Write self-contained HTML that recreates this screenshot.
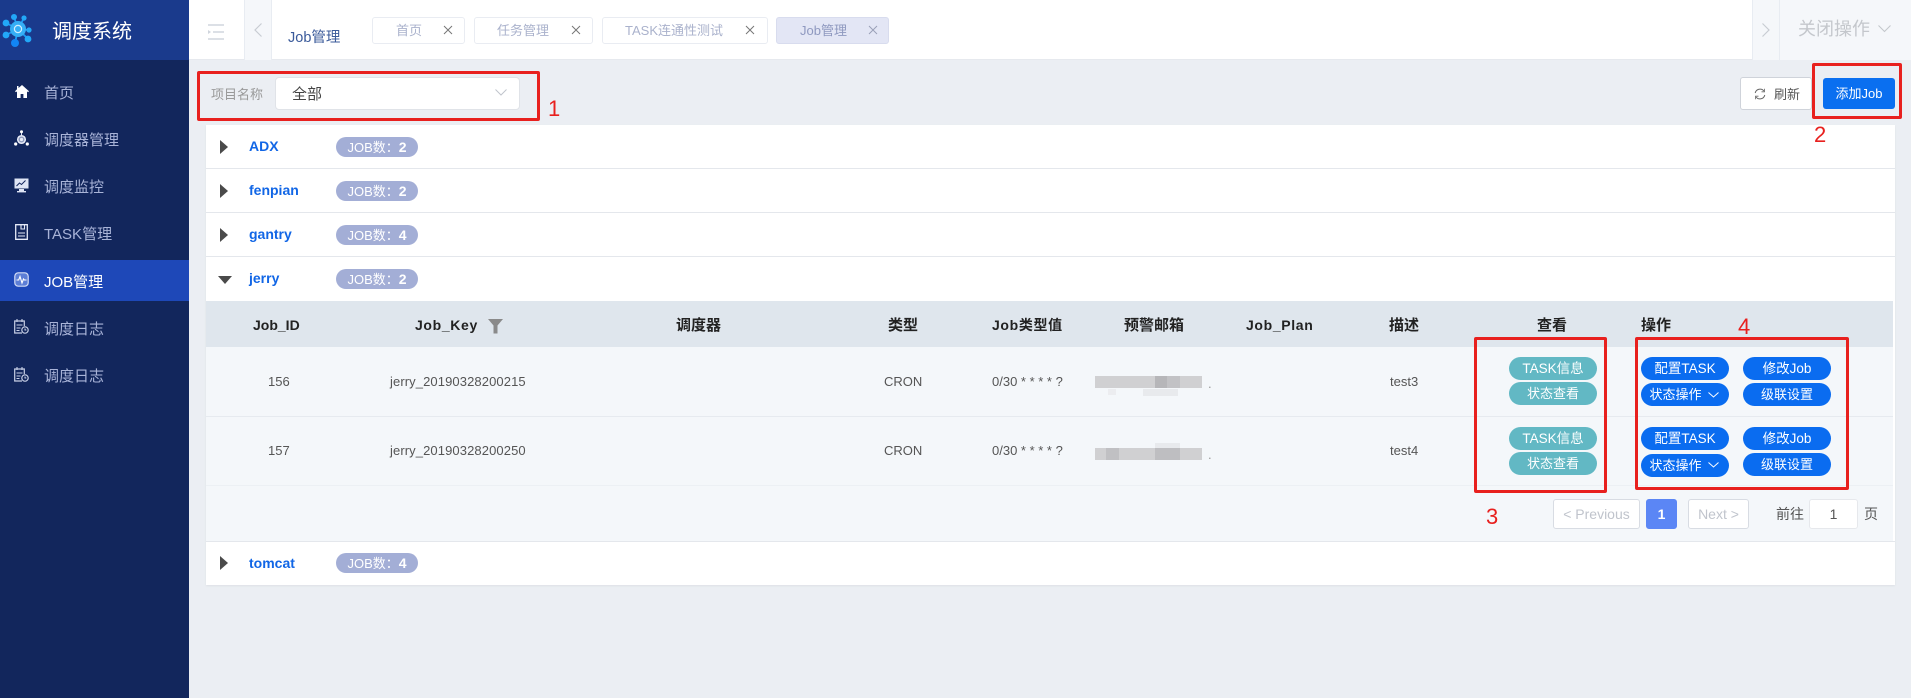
<!DOCTYPE html>
<html lang="zh"><head><meta charset="utf-8"><title>调度系统</title>
<style>
html,body{margin:0;padding:0;background:#ebeef3}
#p{position:relative;width:1911px;height:698px;overflow:hidden;background:#ebeef3;font-family:"Liberation Sans","Noto Sans CJK SC",sans-serif;font-size:13px;color:#555}
#p div,#p span.a,#p svg{position:absolute;box-sizing:border-box}
.t{white-space:nowrap;height:20px;line-height:20px}
.c{text-align:center}
.side{color:#a9b4d8;font-size:15px;left:44px}
.tab{top:17px;height:27px;background:#fff;border:1px solid #e9ecf2;border-radius:3px}
.tt{font-size:13px;color:#aab2cc;top:21px}
.x{top:25px;width:10px;height:10px}
.line{left:206px;width:1689px;height:1px;background:#e4e7ec}
.cr{left:220px;width:0;height:0;border-left:8px solid #4a4a4a;border-top:7px solid transparent;border-bottom:7px solid transparent}
.name{left:249px;font-weight:bold;font-size:14px;color:#1166e6}
.pill{left:336px;width:82px;height:20px;line-height:20px;background:#a3aed6;border-radius:10px;color:#fff;font-size:13px;text-align:center;white-space:nowrap}
.pill b{font-weight:bold;font-size:14px}
.th{font-weight:bold;font-size:14px;color:#222;top:315px}
.th15{font-size:15px;top:316px}
.ls{letter-spacing:.65px}
.td{font-size:13px;color:#555}
.btn{height:23px;line-height:23px;border-radius:12px;color:#fff;font-size:13px;text-align:center;white-space:nowrap;width:88px}
.g{background:#62b8c4;left:1509px;font-size:13.5px}
.b{background:#0a6cf0}
.red{border:3px solid #e8201e;border-radius:2px}
.n{color:#e8201e;font-size:22px;line-height:24px;height:24px}
.pg{top:499px;height:30px;line-height:29px;background:#fff;border:1px solid #d8dce3;border-radius:3px;text-align:center;color:#c0c4cc;font-size:14px}
</style></head><body><div id="p">

<!-- sidebar -->
<div style="left:0;top:0;width:189px;height:698px;background:#12265c"></div>
<div style="left:0;top:0;width:189px;height:60px;background:#1a3a8c"></div>
<svg style="left:0;top:10px" width="40" height="40" viewBox="0 10 40 40">
<g stroke="#1b9cf5" stroke-width="1.8"><path d="M18 29L14 17M18 29L24 18M18 29L29 30M18 29L28 39M18 29L15 43M18 29L6 35M18 29L6 23"/></g>
<g fill="#22a8f8"><circle cx="14" cy="17" r="3"/><circle cx="24" cy="18" r="2.6"/><circle cx="29" cy="30" r="2.6"/><circle cx="28" cy="39" r="3.4"/><circle cx="15" cy="43" r="4" fill="#1285f5"/><circle cx="6" cy="35" r="3.4"/><circle cx="6" cy="23" r="3.4"/><circle cx="18" cy="29" r="8" fill="#35aef5"/></g>
<circle cx="18" cy="29" r="3.6" fill="none" stroke="#cfeeff" stroke-width="1.2"/></svg>
<div class="t" style="left:52px;top:20px;height:24px;line-height:24px;font-size:20px;color:#fff">调度系统</div>

<svg style="left:15px;top:85px" width="14" height="13" viewBox="0 0 14 13"><path d="M7 0L3.5 3V1H2v3.3L0 6.2l1 1L2 6.4V13h3.6V9h2.8v4H12V6.4l1 .8 1-1z" fill="#fff"/></svg>
<div class="t side" style="top:84px">首页</div>
<svg style="left:14px;top:130px" width="15" height="16" viewBox="0 0 15 16"><circle cx="7.5" cy="9.5" r="3.8" fill="#8f9bbd" stroke="#e6ebf8" stroke-width="1.5"/><circle cx="7.5" cy="9.5" r="1.6" fill="#e6ebf8"/><circle cx="7.5" cy="1.7" r="1.5" fill="#fff"/><circle cx="1.7" cy="14" r="1.6" fill="#fff"/><circle cx="13.3" cy="14" r="1.6" fill="#fff"/><path d="M7.5 3v3" stroke="#dfe5f5"/></svg>
<div class="t side" style="top:131px">调度器管理</div>
<svg style="left:14px;top:178px" width="15" height="15" viewBox="0 0 15 15"><rect x="0.5" y="0.5" width="14" height="10" fill="#dfe5f5"/><path d="M2.5 8L5.5 5l2 1.5 4-4" fill="none" stroke="#12265c" stroke-width="1"/><rect x="5" y="11" width="5" height="2" fill="#dfe5f5"/><rect x="3" y="13" width="9" height="1.4" fill="#dfe5f5"/></svg>
<div class="t side" style="top:178px">调度监控</div>
<svg style="left:15px;top:224px" width="13" height="16" viewBox="0 0 13 16"><path d="M.7.7h11.6v14.6H.7z" fill="none" stroke="#e4e9f7" stroke-width="1.3"/><path d="M6 1v4h3.5V1" fill="none" stroke="#e4e9f7" stroke-width="1.1"/><path d="M3 9h7M3 12h7" stroke="#e4e9f7" stroke-width="1.1"/></svg>
<div class="t side" style="top:225px">TASK管理</div>
<div style="left:0;top:260px;width:189px;height:41px;background:#1e48b8"></div>
<svg style="left:14px;top:272px" width="15" height="15" viewBox="0 0 15 15"><rect x="0.8" y="0.8" width="13.4" height="13.4" rx="3.5" fill="#5c7ed6" stroke="#d4ddf5" stroke-width="1.2"/><path d="M2.5 8h2.2l1.3-3.5L8 11l1.5-4 .8 1h2.2" fill="none" stroke="#fff" stroke-width="1.1"/></svg>
<div class="t side" style="top:273px;color:#fff">JOB管理</div>
<svg style="left:14px;top:319px" width="15" height="15" viewBox="0 0 15 15"><path d="M8 14H.7V2h9.6v5" fill="none" stroke="#c8d0e6" stroke-width="1.2"/><path d="M3 0v3M8 0v3M2.5 6h6M2.5 9h4M2.5 11.5h3" stroke="#c8d0e6" stroke-width="1.1"/><circle cx="11" cy="11" r="3.2" fill="#12265c" stroke="#c8d0e6" stroke-width="1.2"/><path d="M11 9.5V11h1.3" fill="none" stroke="#c8d0e6"/></svg>
<div class="t side" style="top:320px">调度日志</div>
<svg style="left:14px;top:367px" width="15" height="15" viewBox="0 0 15 15"><path d="M8 14H.7V2h9.6v5" fill="none" stroke="#c8d0e6" stroke-width="1.2"/><path d="M3 0v3M8 0v3M2.5 6h6M2.5 9h4M2.5 11.5h3" stroke="#c8d0e6" stroke-width="1.1"/><circle cx="11" cy="11" r="3.2" fill="#12265c" stroke="#c8d0e6" stroke-width="1.2"/><path d="M11 9.5V11h1.3" fill="none" stroke="#c8d0e6"/></svg>
<div class="t side" style="top:367px">调度日志</div>

<!-- header -->
<div style="left:189px;top:0;width:1722px;height:60px;background:#fff;border-bottom:1px solid #e6e9ee"></div>
<svg style="left:208px;top:24px" width="16" height="16" viewBox="0 0 16 16"><path d="M0 1h16M5 8h11M0 15h16" stroke="#d0d5dd" stroke-width="1.4"/><path d="M0 6l3 2-3 2z" fill="#d0d5dd"/></svg>
<div style="left:244px;top:0;width:28px;height:60px;background:#f5f7fa;border-left:1px solid #e8ecf2;border-right:1px solid #e8ecf2"></div>
<svg style="left:254px;top:23px" width="8" height="14" viewBox="0 0 8 14"><path d="M7.5.5L1 7l6.5 6.5" fill="none" stroke="#c8ccd2" stroke-width="1.2"/></svg>
<div class="t" style="left:288px;top:28px;font-size:14.5px;color:#3a5a9a">Job管理</div>

<div class="tab" style="left:372px;width:93px"></div><div class="t tt" style="left:396px">首页</div>
<svg class="x" style="left:443px" viewBox="0 0 10 10"><path d="M1 1l8 8M9 1l-8 8" stroke="#777" stroke-width="1"/></svg>
<div class="tab" style="left:474px;width:119px"></div><div class="t tt" style="left:497px">任务管理</div>
<svg class="x" style="left:571px" viewBox="0 0 10 10"><path d="M1 1l8 8M9 1l-8 8" stroke="#777" stroke-width="1"/></svg>
<div class="tab" style="left:602px;width:166px"></div><div class="t tt" style="left:625px">TASK连通性测试</div>
<svg class="x" style="left:745px" viewBox="0 0 10 10"><path d="M1 1l8 8M9 1l-8 8" stroke="#777" stroke-width="1"/></svg>
<div class="tab" style="left:776px;width:113px;background:#e3e6f5;border-color:#d8dcee"></div><div class="t tt" style="left:800px;color:#8f99c0">Job管理</div>
<svg class="x" style="left:868px" viewBox="0 0 10 10"><path d="M1 1l8 8M9 1l-8 8" stroke="#9aa0b8" stroke-width="1"/></svg>

<div style="left:1752px;top:0;width:159px;height:60px;background:#f5f7fa"></div>
<div style="left:1752px;top:0;width:1px;height:60px;background:#e8ecf2"></div>
<div style="left:1779px;top:0;width:1px;height:60px;background:#e8ecf2"></div>
<svg style="left:1762px;top:23px" width="8" height="14" viewBox="0 0 8 14"><path d="M.5.5L7 7 .5 13.5" fill="none" stroke="#c8ccd2" stroke-width="1.2"/></svg>
<div class="t" style="left:1798px;top:17px;height:24px;line-height:24px;font-size:18px;color:#c4c7cc">关闭操作</div>
<svg style="left:1878px;top:25px" width="13" height="8" viewBox="0 0 13 8"><path d="M.5.5l6 6 6-6" fill="none" stroke="#c4c7cc" stroke-width="1.1"/></svg>

<!-- toolbar -->
<div class="t" style="left:211px;top:85px;font-size:13px;color:#999">项目名称</div>
<div style="left:275px;top:77px;width:245px;height:33px;background:#fff;border:1px solid #e0e3e8;border-radius:4px"></div>
<div class="t" style="left:292px;top:85px;font-size:15px;color:#444">全部</div>
<svg style="left:495px;top:89px" width="12" height="7" viewBox="0 0 12 7"><path d="M.5.5L6 6 11.500.5" fill="none" stroke="#c0c4cc" stroke-width="1"/></svg>
<div class="red" style="left:197px;top:71px;width:343px;height:50px"></div>
<div class="n" style="left:548px;top:97px">1</div>

<div style="left:1740px;top:77px;width:72px;height:33px;background:#fff;border:1px solid #cfd3da;border-radius:3px"></div>
<svg style="left:1754px;top:88px" width="12" height="12" viewBox="0 0 12 12"><path d="M1.200 5A5 5 0 0 1 10 3M10.800 7A5 5 0 0 1 2 9" fill="none" stroke="#666" stroke-width="1"/><path d="M10.500 .8v3H7.500M1.500 11.200v-3h3" fill="none" stroke="#666" stroke-width=".8"/></svg>
<div class="t" style="left:1774px;top:85px;font-size:13px;color:#555">刷新</div>
<div class="c" style="left:1823px;top:78px;width:72px;height:31px;line-height:31px;background:#0a6ff0;border-radius:3px;color:#fff;font-size:13px">添加Job</div>
<div class="red" style="left:1812px;top:63px;width:90px;height:56px"></div>

<!-- panel -->
<div style="left:206px;top:125px;width:1689px;height:460px;background:#fff;box-shadow:0 1px 2px rgba(0,0,0,.06)"></div>
<div class="n" style="left:1814px;top:123px">2</div>
<div class="line" style="top:168px"></div>
<div class="line" style="top:212px"></div>
<div class="line" style="top:256px"></div>

<div class="cr" style="top:140px"></div><div class="t name" style="top:136px">ADX</div>
<div class="pill" style="top:137px">JOB数：<b>2</b></div>
<div class="cr" style="top:184px"></div><div class="t name" style="top:180px">fenpian</div>
<div class="pill" style="top:181px">JOB数：<b>2</b></div>
<div class="cr" style="top:228px"></div><div class="t name" style="top:224px">gantry</div>
<div class="pill" style="top:225px">JOB数：<b>4</b></div>
<div class="cr" style="top:276px;left:218px;border-left:7px solid transparent;border-right:7px solid transparent;border-top:8px solid #4a4a4a;border-bottom:0"></div><div class="t name" style="top:268px">jerry</div>
<div class="pill" style="top:269px">JOB数：<b>2</b></div>

<!-- table -->
<div style="left:206px;top:301px;width:1687px;height:46px;background:#dfe6ed"></div>
<div style="left:206px;top:347px;width:1687px;height:195px;background:#f4f7fa"></div>
<div style="left:206px;top:416px;width:1687px;height:1px;background:#e6eaef"></div>
<div style="left:206px;top:485px;width:1687px;height:1px;background:#ecf0f4"></div>
<div class="line" style="top:541px"></div>

<div class="t th" style="left:253px">Job_ID</div>
<div class="t th ls" style="left:415px">Job_Key</div>
<svg style="left:488px;top:319px" width="15" height="15" viewBox="0 0 15 15"><path d="M0 0h15L9.500 6.500V14.500H5.500V6.500z" fill="#8a8a8a"/></svg>
<div class="t th th15" style="left:676px">调度器</div>
<div class="t th th15" style="left:888px">类型</div>
<div class="t th ls" style="left:992px">Job类型值</div>
<div class="t th th15" style="left:1124px">预警邮箱</div>
<div class="t th ls" style="left:1246px">Job_Plan</div>
<div class="t th th15" style="left:1389px">描述</div>
<div class="t th th15" style="left:1537px">查看</div>
<div class="t th th15" style="left:1641px">操作</div>

<div class="t td" style="left:268px;top:372px">156</div>
<div class="t td" style="left:390px;top:372px;letter-spacing:.1px">jerry_20190328200215</div>
<div class="t td" style="left:884px;top:372px">CRON</div>
<div class="t td" style="left:992px;top:372px">0/30 * * * * ?</div>
<div style="left:1095px;top:376px;width:107px;height:12px;background:#d0d0d2"></div>
<div style="left:1155px;top:376px;width:12px;height:12px;background:#b6b6b9"></div>
<div style="left:1167px;top:376px;width:13px;height:12px;background:#c2c2c5"></div>
<div style="left:1108px;top:389px;width:8px;height:6px;background:#ecedf0"></div>
<div style="left:1143px;top:389px;width:35px;height:7px;background:#e8eaed"></div>
<div class="t td" style="left:1208px;top:374px;color:#999">.</div>
<div class="t td" style="left:1390px;top:372px">test3</div>

<div class="t td" style="left:268px;top:441px">157</div>
<div class="t td" style="left:390px;top:441px;letter-spacing:.1px">jerry_20190328200250</div>
<div class="t td" style="left:884px;top:441px">CRON</div>
<div class="t td" style="left:992px;top:441px">0/30 * * * * ?</div>
<div style="left:1095px;top:448px;width:107px;height:12px;background:#d0d0d2"></div>
<div style="left:1106px;top:448px;width:13px;height:12px;background:#c0c0c3"></div>
<div style="left:1155px;top:448px;width:25px;height:12px;background:#bebec1"></div>
<div style="left:1155px;top:443px;width:25px;height:5px;background:#e8eaed"></div>
<div class="t td" style="left:1208px;top:445px;color:#999">.</div>
<div class="t td" style="left:1390px;top:441px">test4</div>

<!-- buttons -->
<div class="btn g" style="top:357px">TASK信息</div>
<div class="btn g" style="top:382px;font-size:13px">状态查看</div>
<div class="btn g" style="top:427px">TASK信息</div>
<div class="btn g" style="top:452px;font-size:13px">状态查看</div>

<div class="btn b" style="left:1641px;top:357px;font-size:13.500px">配置TASK</div>
<div class="btn b" style="left:1743px;top:357px;font-size:13.500px">修改Job</div>
<div class="btn b" style="left:1641px;top:383px;padding-right:19px">状态操作</div>
<svg style="left:1708px;top:392px" width="11" height="6" viewBox="0 0 11 6"><path d="M.5.5l5 4.500 5-4.500" fill="none" stroke="#fff" stroke-width="1"/></svg>
<div class="btn b" style="left:1743px;top:383px">级联设置</div>
<div class="btn b" style="left:1641px;top:427px;font-size:13.500px">配置TASK</div>
<div class="btn b" style="left:1743px;top:427px;font-size:13.500px">修改Job</div>
<div class="btn b" style="left:1641px;top:454px;padding-right:19px">状态操作</div>
<svg style="left:1708px;top:462px" width="11" height="6" viewBox="0 0 11 6"><path d="M.5.5l5 4.500 5-4.500" fill="none" stroke="#fff" stroke-width="1"/></svg>
<div class="btn b" style="left:1743px;top:453px">级联设置</div>

<div class="red" style="left:1474px;top:337px;width:133px;height:156px"></div>
<div class="red" style="left:1635px;top:337px;width:214px;height:153px"></div>
<div class="n" style="left:1486px;top:505px">3</div>
<div class="n" style="left:1738px;top:315px">4</div>

<!-- pagination -->
<div class="pg" style="left:1553px;width:87px">&lt; Previous</div>
<div class="pg" style="left:1646px;width:31px;background:#5b86f5;border-color:#5b86f5;color:#fff;font-weight:bold">1</div>
<div class="pg" style="left:1688px;width:61px">Next &gt;</div>
<div class="t" style="left:1776px;top:504px;font-size:14px;color:#555">前往</div>
<div class="pg" style="left:1809px;width:49px;color:#555;border-color:#e6e8ec;font-size:14px">1</div>
<div class="t" style="left:1864px;top:504px;font-size:14px;color:#555">页</div>

<!-- tomcat -->
<div class="cr" style="top:556px"></div><div class="t name" style="top:553px">tomcat</div>
<div class="pill" style="top:553px">JOB数：<b>4</b></div>

</div></body></html>
